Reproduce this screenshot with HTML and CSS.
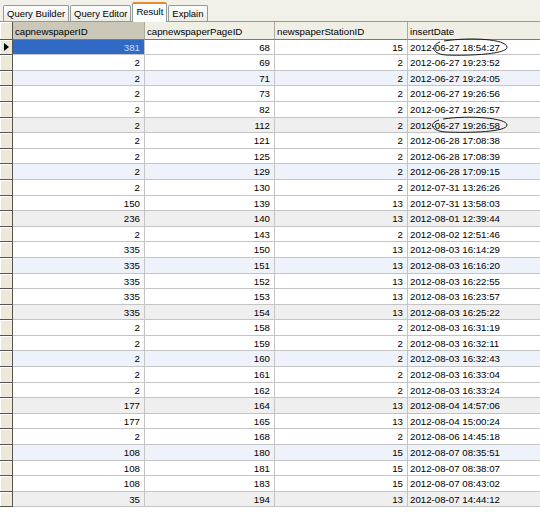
FILE: index.html
```html
<!DOCTYPE html>
<html lang="en">
<head>
    <meta charset="UTF-8">
    <title>Result</title>
    <link rel="stylesheet" href="styles.css">
</head>
<body>
<div class="page">
    <div class="tabs">
        <div class="tab">Query Builder</div>
        <div class="tab">Query Editor</div>
        <div class="tab active">Result</div>
        <div class="tab">Explain</div>
    </div>

    <div class="grid">
        <div class="row head">
            <div class="ind"></div>
            <div class="hcell sorted">capnewspaperID</div>
            <div class="hcell">capnewspaperPageID</div>
            <div class="hcell">newspaperStationID</div>
            <div class="hcell">insertDate</div>
        </div>
        <div class="row"><div class="ind current"></div><div class="cell num selected">381</div><div class="cell num">68</div><div class="cell num">15</div><div class="cell">2012-06-27 18:54:27</div></div>
        <div class="row"><div class="ind"></div><div class="cell num">2</div><div class="cell num">69</div><div class="cell num">2</div><div class="cell">2012-06-27 19:23:52</div></div>
        <div class="row blue"><div class="ind"></div><div class="cell num">2</div><div class="cell num">71</div><div class="cell num">2</div><div class="cell">2012-06-27 19:24:05</div></div>
        <div class="row"><div class="ind"></div><div class="cell num">2</div><div class="cell num">73</div><div class="cell num">2</div><div class="cell">2012-06-27 19:26:56</div></div>
        <div class="row"><div class="ind"></div><div class="cell num">2</div><div class="cell num">82</div><div class="cell num">2</div><div class="cell">2012-06-27 19:26:57</div></div>
        <div class="row gray"><div class="ind"></div><div class="cell num">2</div><div class="cell num">112</div><div class="cell num">2</div><div class="cell">2012-06-27 19:26:58</div></div>
        <div class="row"><div class="ind"></div><div class="cell num">2</div><div class="cell num">121</div><div class="cell num">2</div><div class="cell">2012-06-28 17:08:38</div></div>
        <div class="row"><div class="ind"></div><div class="cell num">2</div><div class="cell num">125</div><div class="cell num">2</div><div class="cell">2012-06-28 17:08:39</div></div>
        <div class="row blue"><div class="ind"></div><div class="cell num">2</div><div class="cell num">129</div><div class="cell num">2</div><div class="cell">2012-06-28 17:09:15</div></div>
        <div class="row"><div class="ind"></div><div class="cell num">2</div><div class="cell num">130</div><div class="cell num">2</div><div class="cell">2012-07-31 13:26:26</div></div>
        <div class="row"><div class="ind"></div><div class="cell num">150</div><div class="cell num">139</div><div class="cell num">13</div><div class="cell">2012-07-31 13:58:03</div></div>
        <div class="row gray"><div class="ind"></div><div class="cell num">236</div><div class="cell num">140</div><div class="cell num">13</div><div class="cell">2012-08-01 12:39:44</div></div>
        <div class="row"><div class="ind"></div><div class="cell num">2</div><div class="cell num">143</div><div class="cell num">2</div><div class="cell">2012-08-02 12:51:46</div></div>
        <div class="row"><div class="ind"></div><div class="cell num">335</div><div class="cell num">150</div><div class="cell num">13</div><div class="cell">2012-08-03 16:14:29</div></div>
        <div class="row blue"><div class="ind"></div><div class="cell num">335</div><div class="cell num">151</div><div class="cell num">13</div><div class="cell">2012-08-03 16:16:20</div></div>
        <div class="row"><div class="ind"></div><div class="cell num">335</div><div class="cell num">152</div><div class="cell num">13</div><div class="cell">2012-08-03 16:22:55</div></div>
        <div class="row"><div class="ind"></div><div class="cell num">335</div><div class="cell num">153</div><div class="cell num">13</div><div class="cell">2012-08-03 16:23:57</div></div>
        <div class="row gray"><div class="ind"></div><div class="cell num">335</div><div class="cell num">154</div><div class="cell num">13</div><div class="cell">2012-08-03 16:25:22</div></div>
        <div class="row"><div class="ind"></div><div class="cell num">2</div><div class="cell num">158</div><div class="cell num">2</div><div class="cell">2012-08-03 16:31:19</div></div>
        <div class="row"><div class="ind"></div><div class="cell num">2</div><div class="cell num">159</div><div class="cell num">2</div><div class="cell">2012-08-03 16:32:11</div></div>
        <div class="row blue"><div class="ind"></div><div class="cell num">2</div><div class="cell num">160</div><div class="cell num">2</div><div class="cell">2012-08-03 16:32:43</div></div>
        <div class="row"><div class="ind"></div><div class="cell num">2</div><div class="cell num">161</div><div class="cell num">2</div><div class="cell">2012-08-03 16:33:04</div></div>
        <div class="row"><div class="ind"></div><div class="cell num">2</div><div class="cell num">162</div><div class="cell num">2</div><div class="cell">2012-08-03 16:33:24</div></div>
        <div class="row gray"><div class="ind"></div><div class="cell num">177</div><div class="cell num">164</div><div class="cell num">13</div><div class="cell">2012-08-04 14:57:06</div></div>
        <div class="row"><div class="ind"></div><div class="cell num">177</div><div class="cell num">165</div><div class="cell num">13</div><div class="cell">2012-08-04 15:00:24</div></div>
        <div class="row"><div class="ind"></div><div class="cell num">2</div><div class="cell num">168</div><div class="cell num">2</div><div class="cell">2012-08-06 14:45:18</div></div>
        <div class="row blue"><div class="ind"></div><div class="cell num">108</div><div class="cell num">180</div><div class="cell num">15</div><div class="cell">2012-08-07 08:35:51</div></div>
        <div class="row"><div class="ind"></div><div class="cell num">108</div><div class="cell num">181</div><div class="cell num">15</div><div class="cell">2012-08-07 08:38:07</div></div>
        <div class="row"><div class="ind"></div><div class="cell num">108</div><div class="cell num">183</div><div class="cell num">15</div><div class="cell">2012-08-07 08:43:02</div></div>
        <div class="row gray"><div class="ind"></div><div class="cell num">35</div><div class="cell num">194</div><div class="cell num">13</div><div class="cell">2012-08-07 14:44:12</div></div>
    </div>

    <!-- hand-drawn marks over the insertDate column -->
    <svg class="marks" width="540" height="512" viewBox="0 0 540 512">
        <path d="M444 41 C470 37 506 39 507 47 C508 54 470 56 446 55 C432 54 430 46 440 42" fill="none" stroke="#1a1a1a" stroke-width="1"/>
        <path d="M443 119 C470 115 507 118 507 125 C507 132 470 133 446 132 C430 131 429 123 439 120" fill="none" stroke="#1a1a1a" stroke-width="1"/>
    </svg>
</div>
</body>
</html>
```

FILE: styles.css
```css
body {
    margin: 0;
    background: #fff;
    font-family: "Liberation Sans", Arial, sans-serif;
    color: #000;
}

.page {
    position: relative;
    width: 540px;
    height: 512px;
    overflow: hidden;
}

.tabs {
    display: flex;
    align-items: flex-end;
    height: 22px;
    padding-left: 3px;
    box-sizing: border-box;
    background: #f1f0e9;
    border-bottom: 1px solid #919b9c;
}

.tab {
    height: 16px;
    margin-right: 1px;
    padding: 0 3px;
    border: 1px solid #919b9c;
    border-bottom: none;
    border-radius: 2px 2px 0 0;
    background: linear-gradient(#fefefe, #ecebe4);
    font-size: 9.5px;
    line-height: 16px;
    box-sizing: border-box;
}

.tab.active {
    height: 20px;
    margin-bottom: -1px;
    padding-top: 0;
    border-top: 2px solid #e68b2c;
    background: #fcfcfe;
    line-height: 15px;
}

.grid {
    font-size: 9.7px;
}

.row {
    display: grid;
    grid-template-columns: 13px 132px 130px 133px 150px;
    height: 15.6px;
}

.row.head {
    height: 17.6px;
}

.ind {
    background: #ece9d8;
    border-right: 1px solid #555;
    border-bottom: 1px solid #555;
    box-shadow: inset 1px 1px 0 #fff;
    box-sizing: border-box;
    position: relative;
}

.ind.current::after {
    content: "";
    position: absolute;
    left: 4px;
    top: 3px;
    border-left: 5px solid #000;
    border-top: 4.5px solid transparent;
    border-bottom: 4.5px solid transparent;
}

.hcell {
    padding: 0 2px;
    background: #f0efe6;
    border-right: 1px solid #aca899;
    border-bottom: 1px solid #7a7a72;
    line-height: 20px;
    white-space: nowrap;
    overflow: hidden;
    box-sizing: border-box;
}

.hcell.sorted {
    background: #cbc8ba;
}

.cell {
    padding: 0 2px;
    background: #fff;
    border-right: 1px solid #c4c4c4;
    border-bottom: 1px solid #c4c4c4;
    line-height: 15px;
    white-space: nowrap;
    overflow: hidden;
    box-sizing: border-box;
}

.cell.num {
    text-align: right;
    padding-right: 4px;
}

.row.blue .cell {
    background: #eef3fb;
}

.row.gray .cell {
    background: #efefef;
}

.cell.selected {
    background: #316ac5;
    color: #c8dcfa;
}

.marks {
    position: absolute;
    left: 0;
    top: 0;
    pointer-events: none;
}
```
